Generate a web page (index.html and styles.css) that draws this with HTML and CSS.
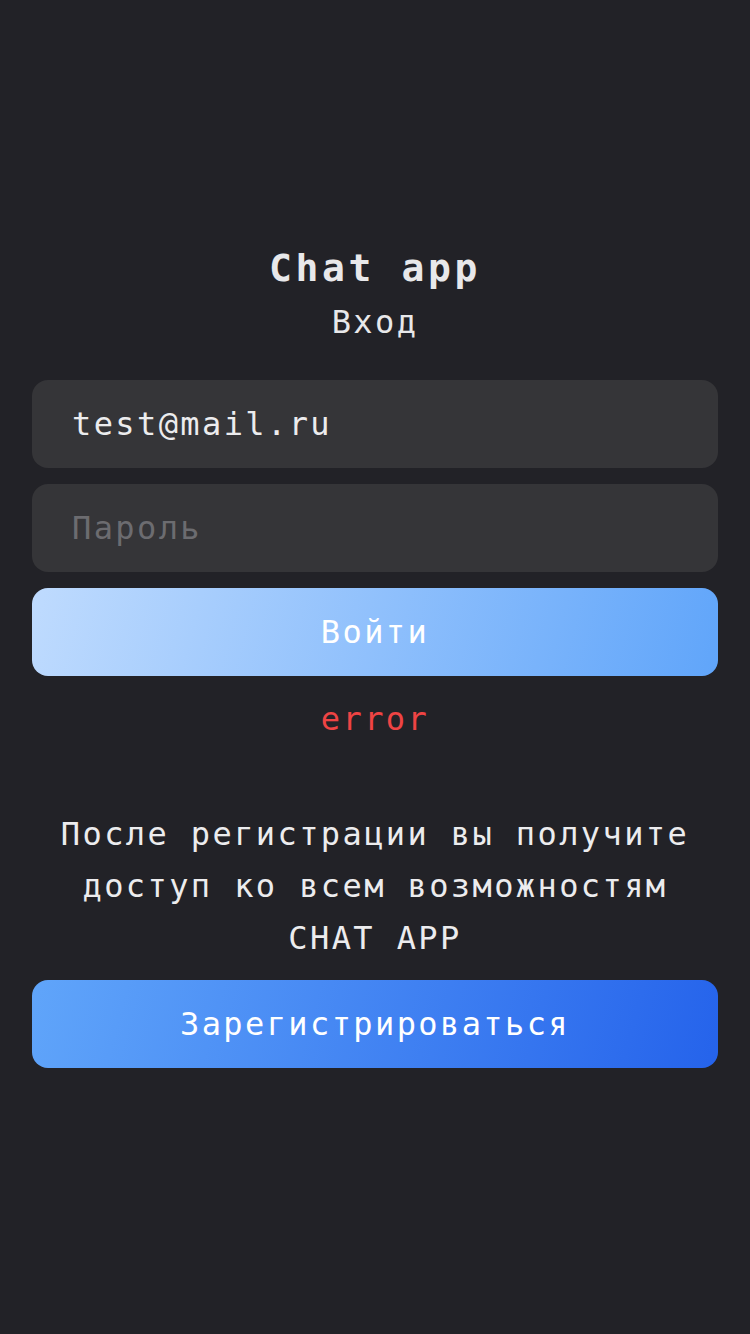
FILE: index.html
```html
<!DOCTYPE html>
<html lang="ru">
<head>
<meta charset="utf-8">
<title>Chat app</title>
<link rel="stylesheet" href="styles.css">
</head>
<body>
<main class="page">
  <h1 class="title">Chat app</h1>
  <h2 class="subtitle">Вход</h2>
  <form class="form">
    <input class="field" type="email" value="test@mail.ru">
    <input class="field" type="password" placeholder="Пароль">
    <button class="btn btn-login" type="button">Войти</button>
  </form>
  <p class="error">error</p>
  <p class="info">После регистрации вы получите доступ ко всем возможностям CHAT APP</p>
  <button class="btn btn-register" type="button">Зарегистрироваться</button>
</main>
</body>
</html>
```

FILE: styles.css
```css
* { box-sizing: border-box; }
html, body {
  margin: 0;
  padding: 0;
  background: #222227;
}
body {
  font-family: "DejaVu Sans Mono", "Liberation Mono", monospace;
  color: #e8e8ea;
  letter-spacing: 2.4px;
}
.page {
  min-height: 1334px;
  padding: 241px 32px 0;
  display: flex;
  flex-direction: column;
}
.title {
  margin: 0;
  font-size: 38px;
  line-height: 54px;
  font-weight: 700;
  text-align: center;
  letter-spacing: 3.6px;
  color: #e8e8ea;
}
.subtitle {
  margin: 0;
  font-size: 32px;
  line-height: 54px;
  font-weight: 400;
  text-align: center;
}
.form {
  margin-top: 31px;
  display: flex;
  flex-direction: column;
  gap: 16px;
}
.field {
  height: 88px;
  border: none;
  outline: none;
  border-radius: 16px;
  background: #353538;
  padding: 0 40px;
  font-family: inherit;
  font-size: 32px;
  letter-spacing: 2.4px;
  color: #ececee;
}
.field::placeholder { color: #6c6c70; }
.btn {
  height: 88px;
  border: none;
  border-radius: 16px;
  font-family: inherit;
  font-size: 32px;
  letter-spacing: 2.4px;
  color: #ffffff;
  width: 100%;
}
.btn-login {
  background: linear-gradient(105deg, #bfdbfe 0%, #60a5fa 100%);
}
.btn-register {
  margin-top: 16px;
  background: linear-gradient(105deg, #60a5fa 0%, #2563eb 100%);
}
.error {
  margin: 17px 0 0;
  font-size: 32px;
  line-height: 52px;
  text-align: center;
  color: #ef4444;
}
.info {
  margin: 63px 0 0;
  padding: 0 20px;
  font-size: 32px;
  line-height: 52px;
  text-align: center;
  color: #ececee;
}
```
